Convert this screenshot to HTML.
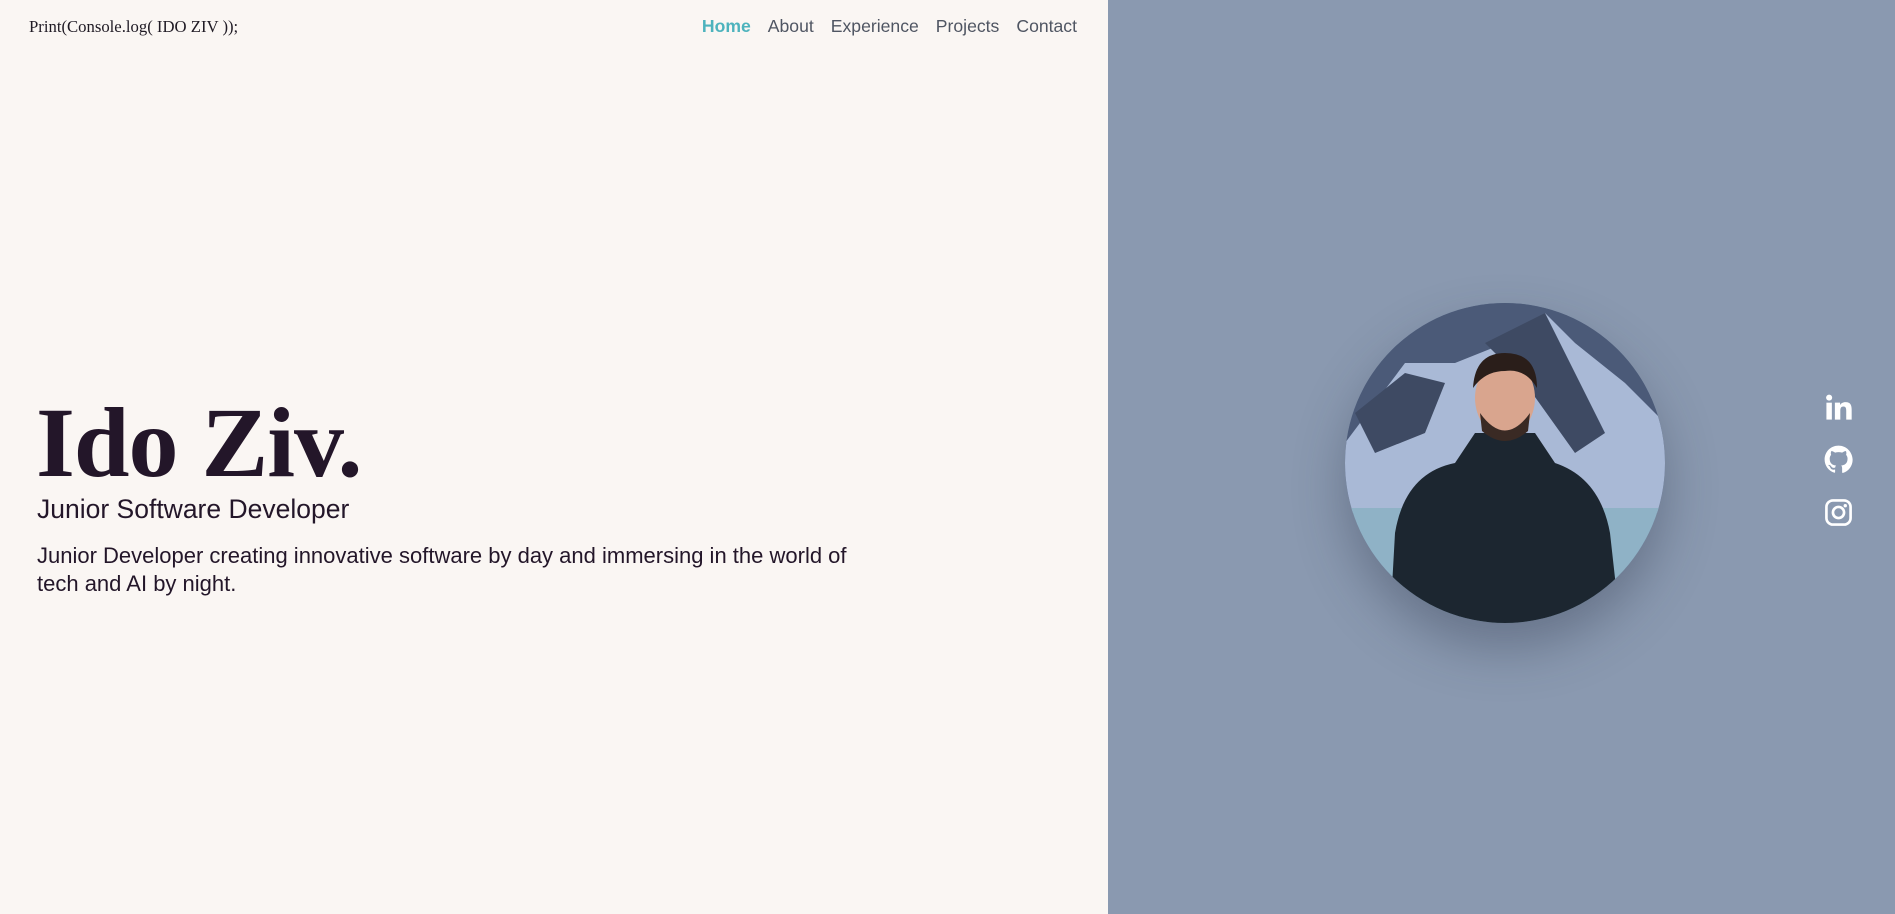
<!DOCTYPE html>
<html><head><meta charset="utf-8"><style>
html,body{margin:0;padding:0;width:1895px;height:914px;overflow:hidden;background:#faf6f3;}
.left{position:absolute;left:0;top:0;width:1108px;height:914px;background:#faf6f3;}
.right{position:absolute;left:1108px;top:0;width:787px;height:914px;background:#8a99b0;}
.logo{position:absolute;left:29px;top:17px;font:16.7px "Liberation Serif",serif;color:#1f1a24;}
.nav{position:absolute;top:16px;right:31px;font:17.6px "Liberation Sans",sans-serif;color:#4f5562;display:flex;gap:17px;}
.nav .on{color:#4db3bd;font-weight:bold;}
h1{position:absolute;left:36px;top:393px;margin:0;font:bold 100px/1 "Liberation Serif",serif;color:#231629;letter-spacing:-1px;}
.sub{position:absolute;left:37px;top:494px;font:26.5px "Liberation Sans",sans-serif;color:#231629;}
.p{position:absolute;left:37px;top:542px;width:850px;font:22px/28px "Liberation Sans",sans-serif;color:#231629;}
.photo{position:absolute;left:1345px;top:303px;width:320px;height:320px;border-radius:50%;overflow:hidden;box-shadow:0 25px 50px rgba(40,50,70,.35);}
.icons{position:absolute;left:1824px;top:393px;}
</style></head><body>
<div class="left">
<div class="logo">Print(Console.log( IDO ZIV ));</div>
<div class="nav"><span class="on">Home</span><span>About</span><span>Experience</span><span>Projects</span><span>Contact</span></div>
<h1>Ido Ziv.</h1>
<div class="sub">Junior Software Developer</div>
<div class="p">Junior Developer creating innovative software by day and immersing in the world of tech and AI by night.</div>
</div>
<div class="right"></div>
<div class="photo"><svg width="320" height="320" viewBox="0 0 320 320">
<rect width="320" height="320" fill="#5a6c8c"/>
<polygon points="0,0 320,0 320,200 0,200" fill="#4b5a78"/>
<polygon points="0,140 60,60 110,60 160,40 200,10 230,40 280,80 320,120 320,210 0,210" fill="#a9b9d6"/>
<polygon points="140,40 200,10 260,130 230,150 180,80" fill="#3e4a63"/>
<polygon points="10,110 60,70 100,80 80,130 30,150" fill="#3e4a63"/>
<rect y="205" width="320" height="115" fill="#8fb2c6"/>
<path d="M45,320 L50,230 Q60,170 110,160 L130,130 L190,130 L210,160 Q255,175 265,230 L275,320 Z" fill="#1c2630"/>
<ellipse cx="160" cy="95" rx="30" ry="38" fill="#d9a58e"/>
<path d="M128,85 Q130,50 160,50 Q192,50 192,85 Q180,65 160,68 Q140,68 128,85Z" fill="#2a1e1a"/>
<path d="M135,110 Q160,145 185,110 L183,128 Q160,148 137,128Z" fill="#3a2a24"/>
</svg></div>
<div class="icons">
<svg width="29" height="29" viewBox="0 0 24 24" style="position:absolute;top:0;left:0"><rect x="2" y="8" width="4.5" height="14" fill="#fff"/><circle cx="4.25" cy="3.8" r="2.5" fill="#fff"/><path d="M9 8h4.3v2c.7-1.3 2.3-2.4 4.6-2.4 4.2 0 5 2.8 5 6.4V22h-4.5v-7c0-1.7-.1-3.8-2.3-3.8-2.3 0-2.6 1.8-2.6 3.7V22H9z" fill="#fff"/></svg>
<svg width="29" height="29" viewBox="0 0 24 24" style="position:absolute;top:52px;left:0"><path fill="#fff" d="M12 .5C5.6.5.5 5.6.5 12c0 5.1 3.3 9.4 7.9 10.9.6.1.8-.2.8-.6v-2c-3.2.7-3.9-1.5-3.9-1.5-.5-1.3-1.3-1.7-1.3-1.7-1-.7.1-.7.1-.7 1.2.1 1.8 1.2 1.8 1.2 1 1.8 2.7 1.3 3.4 1 .1-.8.4-1.3.7-1.6-2.6-.3-5.3-1.3-5.3-5.7 0-1.3.5-2.3 1.2-3.1-.1-.3-.5-1.5.1-3.1 0 0 1-.3 3.2 1.2a11 11 0 0 1 5.8 0c2.2-1.5 3.2-1.2 3.2-1.2.6 1.6.2 2.8.1 3.1.7.8 1.2 1.8 1.2 3.1 0 4.4-2.7 5.4-5.3 5.7.4.4.8 1.1.8 2.2v3.3c0 .3.2.7.8.6 4.6-1.5 7.9-5.8 7.9-10.9C23.5 5.6 18.4.5 12 .5z"/></svg>
<svg width="29" height="29" viewBox="0 0 24 24" style="position:absolute;top:105px;left:0"><rect x="2" y="2" width="20" height="20" rx="5.5" fill="none" stroke="#fff" stroke-width="2.2"/><circle cx="12" cy="12" r="4.6" fill="none" stroke="#fff" stroke-width="2.2"/><circle cx="17.6" cy="6.4" r="1.4" fill="#fff"/></svg>
</div>
</body></html>
